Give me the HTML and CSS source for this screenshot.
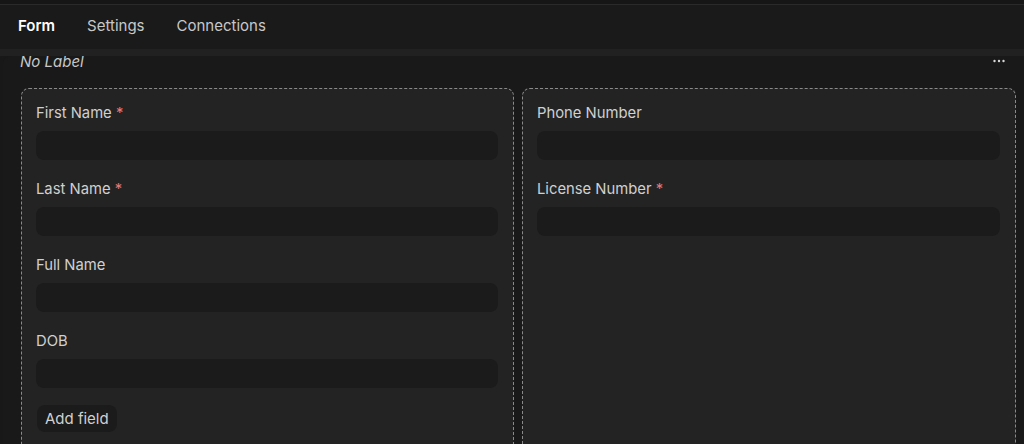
FILE: index.html
```html
<!DOCTYPE html>
<html>
<head>
<meta charset="utf-8">
<link rel="stylesheet" href="styles.css">
</head>
<body>
<div class="topgap"></div>
<nav class="tabs">
  <span class="tab active">Form</span>
  <span class="tab">Settings</span>
  <span class="tab">Connections</span>
</nav>
<div class="strip"></div>
<section class="panel">
  <div class="panel-head">
    <span class="panel-title">No Label</span>
    <svg class="more" width="12" height="4" viewBox="0 0 12 4"><circle cx="1.5" cy="2" r="1.2" fill="#d8d8d8"/><circle cx="6" cy="2" r="1.2" fill="#d8d8d8"/><circle cx="10.5" cy="2" r="1.2" fill="#d8d8d8"/></svg>
  </div>
  <div class="columns">
    <div class="card">
      <div class="field">
        <label class="label">First Name <span class="req">*</span></label>
        <div class="input"></div>
      </div>
      <div class="field">
        <label class="label">Last Name <span class="req">*</span></label>
        <div class="input"></div>
      </div>
      <div class="field">
        <label class="label">Full Name</label>
        <div class="input"></div>
      </div>
      <div class="field">
        <label class="label">DOB</label>
        <div class="input"></div>
      </div>
      <button class="add">Add field</button>
    </div>
    <div class="card">
      <div class="field">
        <label class="label">Phone Number</label>
        <div class="input"></div>
      </div>
      <div class="field">
        <label class="label">License Number <span class="req">*</span></label>
        <div class="input"></div>
      </div>
    </div>
  </div>
</section>
</body>
</html>
```
FILE: styles.css
```css
html, body {
  margin: 0;
  padding: 0;
  background: #181818;
  font-family: Inter, "Open Sans", sans-serif;
  color: #d4d4d4;
  height: 444px;
  overflow: hidden;
}
.topgap {
  height: 4px;
  background: #161616;
}
.tabs {
  height: 40px;
  padding-bottom: 4px;
  background: #1a1a1a;
  border-top: 1px solid #2a2a2a;
  display: flex;
  align-items: center;
  padding-left: 18px;
  gap: 32px;
  font-size: 15px;
}
.tab {
  color: #c8c8c8;
}
.tab.active {
  color: #ffffff;
  font-weight: 600;
}
.strip {
  height: 7px;
  background: #212121;
}
.panel {
  margin-left: 3px;
  background: #191919;
  border-top-left-radius: 8px;
  height: 400px;
}
.panel-head {
  display: flex;
  justify-content: space-between;
  align-items: center;
  height: 10px;
  padding: 0 19px 0 17px;
}
.panel-title {
  font-style: italic;
  font-size: 15px;
  color: #c8c8c8;
}
.more {
  display: block;
}
.columns {
  display: grid;
  grid-template-columns: 493px 494px;
  gap: 8px;
  margin: 22px 0 0 18px;
}
.card {
  background: #232323;
  border: 1px dashed #8a8a8a;
  border-radius: 8px;
  height: 400px;
  padding: 15px 15px 0 14px;
  box-sizing: border-box;
}
.field {
  margin-bottom: 20px;
}
.label {
  display: block;
  font-size: 14.8px;
  line-height: 19px;
  margin-bottom: 8px;
  color: #d0d0d0;
}
.req {
  color: #e07a7a;
}
.input {
  height: 29px;
  background: #1b1b1b;
  border-radius: 8px;
}
.add {
  margin-top: -4px;
  margin-left: 1px;
  background: #1b1b1b;
  border: none;
  border-radius: 8px;
  color: #d0d0d0;
  font-family: inherit;
  font-size: 15px;
  padding: 4px 8px;
  height: 27px;
}
```
